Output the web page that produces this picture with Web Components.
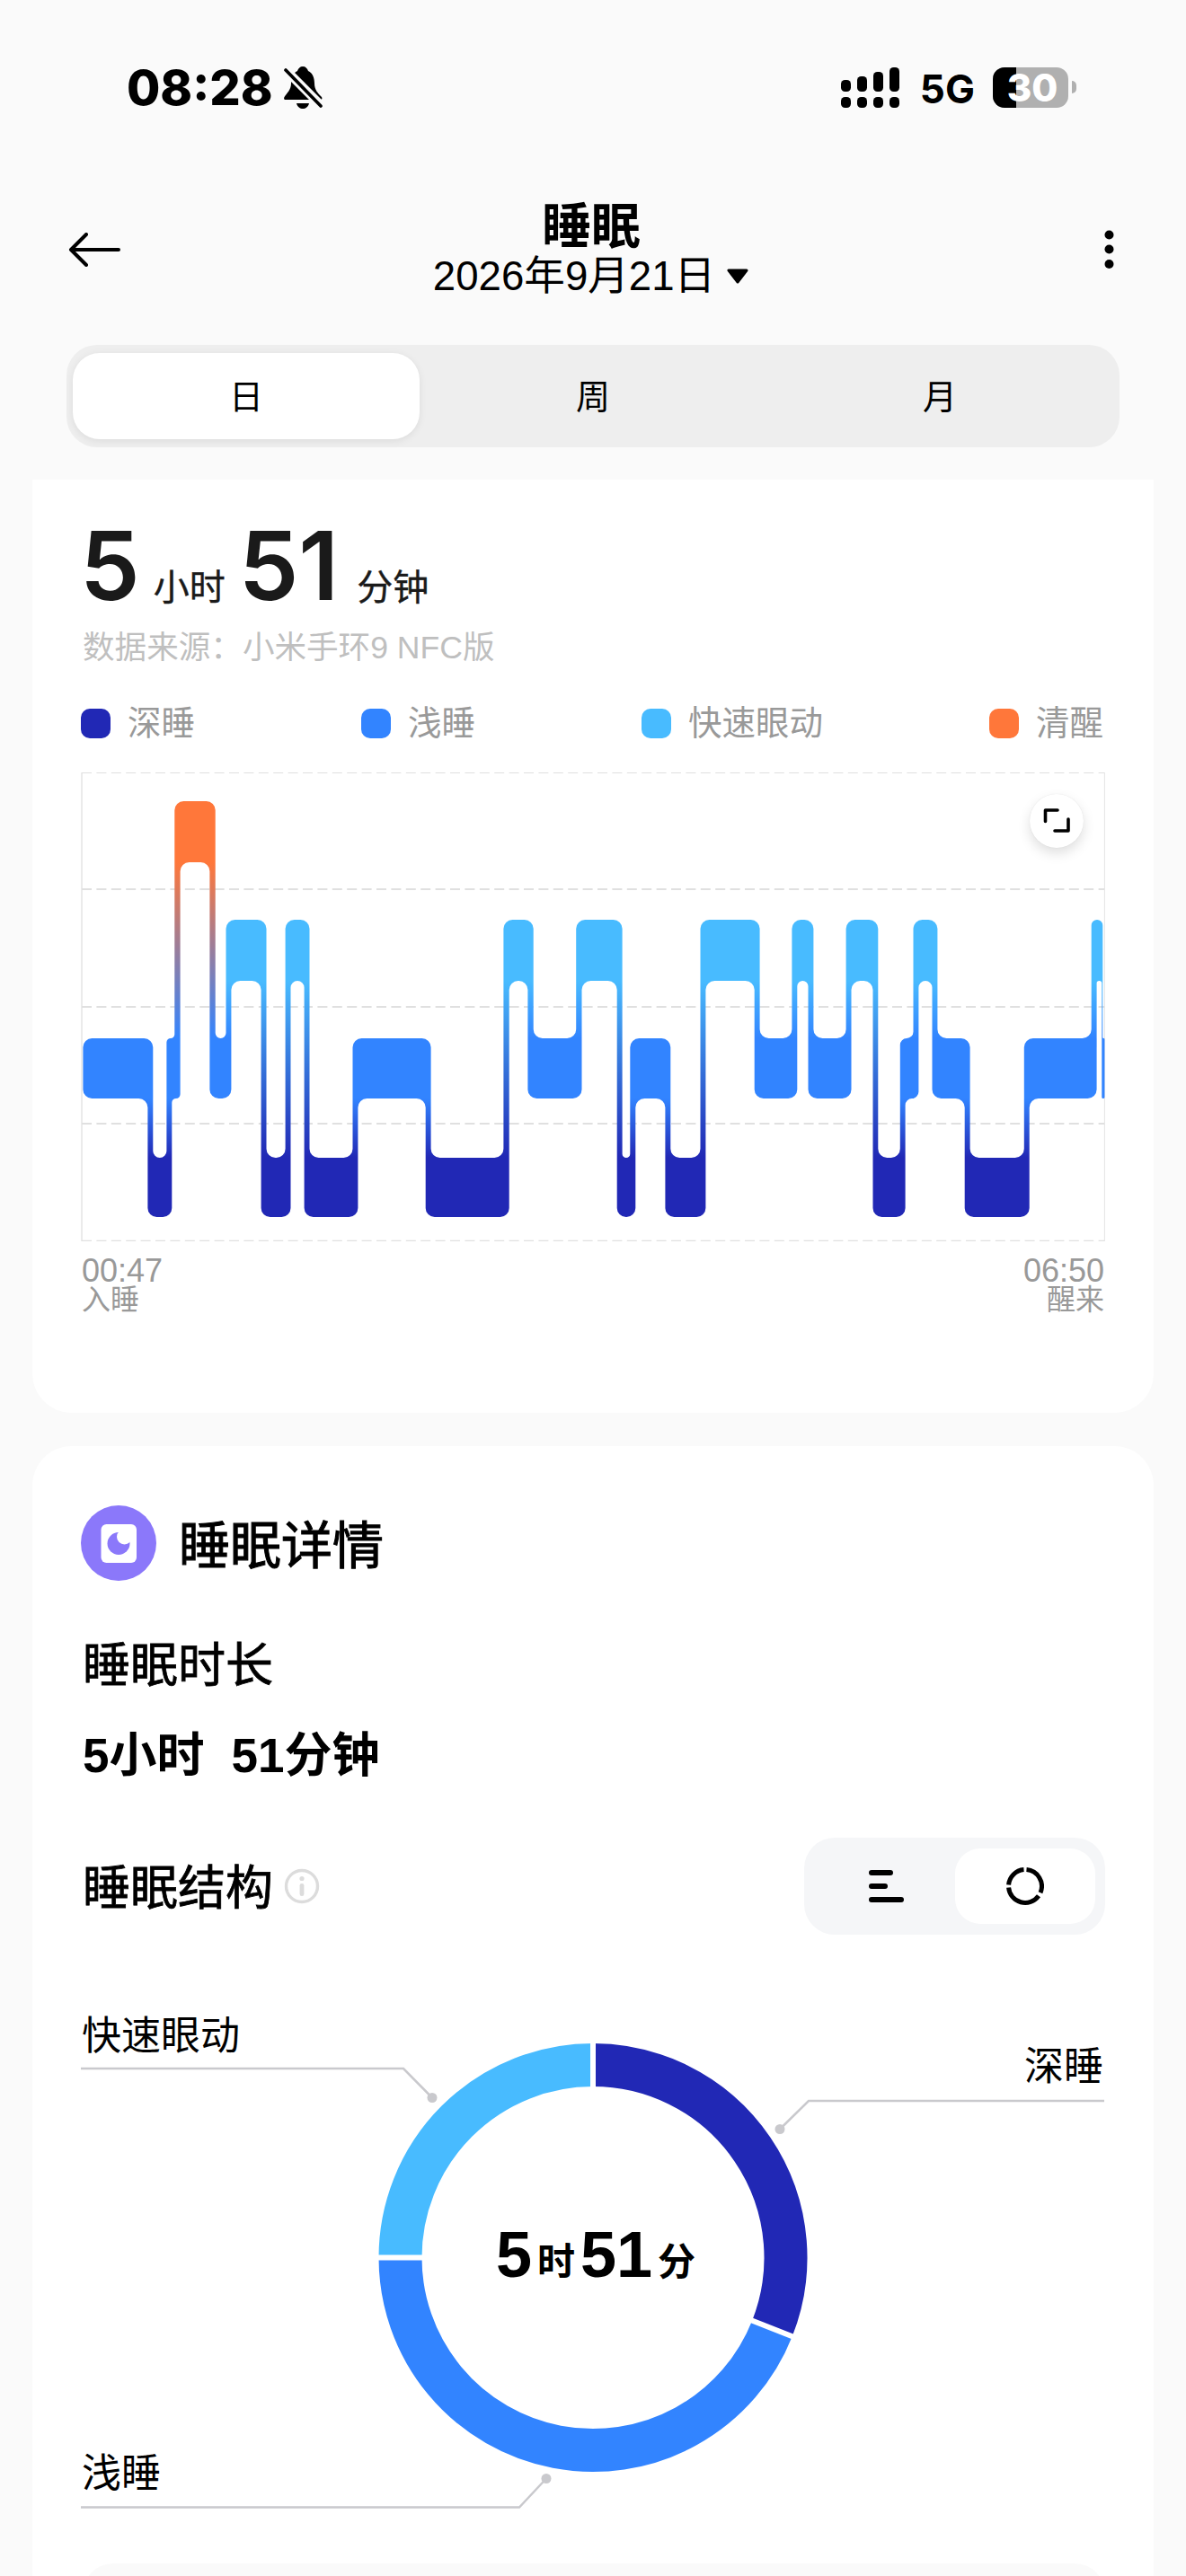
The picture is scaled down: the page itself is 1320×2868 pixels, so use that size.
<!DOCTYPE html>
<html lang="zh-CN">
<head>
<meta charset="utf-8">
<title>睡眠</title>
<style>
html, body { margin: 0; padding: 0; height: 2868px; overflow: hidden; background: #fafafa; }
body { font-family: "Liberation Sans", "Noto Sans CJK SC", sans-serif; color: #000; }
</style>
</head>
<body>
<sleep-page>
	<status-bar time="08:28" network="5G" battery="30"></status-bar>
	<nav-header title="睡眠" date="2026年9月21日"></nav-header>
	<period-tabs>
		<span slot="a">日</span>
		<span slot="b">周</span>
		<span slot="c">月</span>
	</period-tabs>
	<summary-card></summary-card>
	<details-card></details-card>
</sleep-page>
<script>
class SleepPage extends HTMLElement {
	constructor() {
		super()
		this.attachShadow({ mode: 'open' })
		this.shadowRoot.innerHTML = `
		<style>
		:host { display: flex; flex-direction: column; width: 1320px; height: 2868px; overflow: hidden; }
		</style>
		<slot></slot>
		`
	}
}

class StatusBar extends HTMLElement {
	constructor() {
		super()
		this.attachShadow({ mode: 'open' })
	}
	connectedCallback() {
		this.shadowRoot.innerHTML = `
		<style>
		:host { display: flex; justify-content: space-between; align-items: flex-start; height: 200px; padding: 74px 122px 0 141px; box-sizing: border-box; font-family: Inter, "Liberation Sans", sans-serif; color: #000; }
		.left, .right { display: flex; align-items: center; height: 46px; }
		.time { font-size: 54px; font-weight: 800; line-height: 46px; padding-top: 1px; }
		.bell { margin-left: 12px; }
		.net { font-size: 44px; font-weight: 700; line-height: 46px; margin: 0 20px 0 23px; padding-top: 3px; }
		.battery { display: flex; align-items: center; position: relative; }
		.cell { position: relative; width: 84px; height: 45px; border-radius: 13px; background: #b0b0b0; font-size: 42px; font-weight: 800; line-height: 45px; color: #fff; text-align: center; }
		.cell i { position: absolute; left: 0; top: 0; bottom: 0; width: 26px; border-radius: 13px 0 0 13px; background: #000; }
		.cell b { position: relative; font-weight: 800; left: 2px; }
		.tip { width: 5px; height: 14px; margin-left: 4px; border-radius: 0 7px 7px 0; background: #b0b0b0; }
		</style>
		<div class="left">
			<span class="time">${this.getAttribute('time')}</span>
			<svg class="bell" width="43" height="47" viewBox="0 0 43 47">
				<path d="M21 0C18 0 16 2 15 5C10 7 8 13 8 19C8 26 3 30 .5 34C-.5 36 .5 37 2 37H40C42 37 43 36 42 34C38 30 34 26 34 19C34 13 32 7 27 5C26 2 24 0 21 0Z"/>
				<path d="M14 41H28C27 45 24 47 21 47C18 47 15 45 14 41Z"/>
				<path d="M1 3L42 44" stroke="#fafafa" stroke-width="10"/>
				<path d="M2 4L41 44" stroke="#000" stroke-width="3.6" stroke-linecap="round"/>
			</svg>
		</div>
		<div class="right">
			<svg width="65" height="45" viewBox="0 0 65 45">
				<rect x="0" y="14" width="11" height="13" rx="4.5"/><rect x="18" y="10" width="11" height="17" rx="4.5"/><rect x="36" y="5" width="11" height="22" rx="4.5"/><rect x="54" y="0" width="11" height="27" rx="4.5"/>
				<rect x="0" y="33" width="11" height="12" rx="4.5"/><rect x="18" y="33" width="11" height="12" rx="4.5"/><rect x="36" y="33" width="11" height="12" rx="4.5"/><rect x="54" y="33" width="11" height="12" rx="4.5"/>
			</svg>
			<span class="net">${this.getAttribute('network')}</span>
			<div class="battery">
				<div class="cell"><i></i><b>${this.getAttribute('battery')}</b></div>
				<div class="tip"></div>
			</div>
		</div>
		`
	}
}

class NavHeader extends HTMLElement {
	constructor() {
		super()
		this.attachShadow({ mode: 'open' })
	}
	connectedCallback() {
		this.shadowRoot.innerHTML = `
		<style>
		:host { display: grid; grid-template-columns: 130px 1fr 130px; align-items: center; height: 155px; padding: 0 80px 0 76px; box-sizing: border-box; }
		.mid { display: flex; flex-direction: column; align-items: center; padding-bottom: 2px; }
		.title { font-size: 55px; font-weight: 700; line-height: 62px; }
		.date { display: flex; align-items: center; gap: 12px; font-size: 45.6px; line-height: 50px; }
		.more { justify-self: end; }
		</style>
		<svg width="58" height="38" viewBox="0 0 58 38">
			<path d="M56 19H3M20 2L3 19L20 36" fill="none" stroke="#000" stroke-width="4" stroke-linecap="round" stroke-linejoin="round"/>
		</svg>
		<div class="mid">
			<div class="title">${this.getAttribute('title')}</div>
			<div class="date">
				<span>${this.getAttribute('date')}</span>
				<svg width="26" height="17" viewBox="0 0 26 17"><path d="M3 2H23L13 15Z" fill="#000" stroke="#000" stroke-width="3" stroke-linejoin="round"/></svg>
			</div>
		</div>
		<svg class="more" width="11" height="44" viewBox="0 0 11 44">
			<circle cx="5.5" cy="5.5" r="5"/><circle cx="5.5" cy="21.5" r="5"/><circle cx="5.5" cy="38" r="5"/>
		</svg>
		`
	}
}

class PeriodTabs extends HTMLElement {
	constructor() {
		super()
		this.attachShadow({ mode: 'open' })
		this.shadowRoot.innerHTML = `
		<style>
		:host { display: grid; grid-template-columns: repeat(3, 386px); flex: none; height: 114px; margin: 29px 74px 0; padding: 9px 7px; box-sizing: border-box; border-radius: 34px; background: #eeeeee; font-size: 38px; color: #000; }
		div { display: flex; align-items: center; justify-content: center; padding-bottom: 5px; box-sizing: border-box; border-radius: 30px; }
		.on { background: #fff; box-shadow: 0 2px 8px rgba(0,0,0,.08); }
		</style>
		<div class="on"><slot name="a"></slot></div>
		<div><slot name="b"></slot></div>
		<div><slot name="c"></slot></div>
		`
	}
}

class LegendItem extends HTMLElement {
	constructor() {
		super()
		this.attachShadow({ mode: 'open' })
	}
	connectedCallback() {
		this.shadowRoot.innerHTML = `
		<style>
		:host { display: flex; align-items: center; gap: 19px; font-size: 37.5px; line-height: 44px; color: #999; }
		i { width: 33px; height: 33px; border-radius: 10px; background: ${this.getAttribute('color')}; }
		</style>
		<i></i><slot></slot>
		`
	}
}

// stages: top edge, bottom edge, colour, order from the top of the chart
const STAGES = {
	W: { top: 892, bottom: 960, color: '#ff773a', rank: 0 },
	R: { top: 1024, bottom: 1092, color: '#48bbff', rank: 1 },
	L: { top: 1156, bottom: 1223, color: '#3284ff', rank: 2 },
	D: { top: 1289, bottom: 1355, color: '#2128b5', rank: 3 }
}
const SEGMENTS = [
	[92.4, 170.3, 'L'], [164.4, 191.3, 'D'], [185.4, 200.6, 'L'], [194.3, 239.7, 'W'],
	[233.4, 257.4, 'L'], [251.5, 296.5, 'R'], [290.6, 323.5, 'D'], [317.6, 344.5, 'R'],
	[338.6, 398.4, 'D'], [392.5, 479.6, 'L'], [473.7, 566.7, 'D'], [560.4, 593.7, 'R'],
	[587.4, 647.5, 'L'], [641.2, 692.6, 'R'], [686.7, 707.3, 'D'], [701.3, 746.3, 'L'],
	[740.4, 785.4, 'D'], [779.5, 845.6, 'R'], [839.7, 887.3, 'L'], [881.4, 905.4, 'R'],
	[899.5, 947.5, 'L'], [941.6, 977.3, 'R'], [971.5, 1007.6, 'D'], [1001.8, 1022.4, 'L'],
	[1016.5, 1043.4, 'R'], [1037.5, 1079.6, 'L'], [1073.7, 1145.7, 'D'], [1139.8, 1220.6, 'L'],
	[1214.7, 1227.3, 'R'], [1226.3, 1229.4, 'L']
]

class StageChart extends HTMLElement {
	constructor() {
		super()
		this.attachShadow({ mode: 'open' })
		this.shadowRoot.innerHTML = `
		<style>
		:host { display: block; position: relative; width: 1140px; height: 522px; }
		svg.chart { display: block; }
		.expand { position: absolute; left: 1056px; top: 24px; width: 60px; height: 60px; border-radius: 50%; background: #fff; box-shadow: 0 6px 14px rgba(0,0,0,.13), 0 0 1px rgba(0,0,0,.12); display: flex; align-items: center; justify-content: center; }
		</style>
		<svg class="chart" width="1140" height="522" viewBox="90 860 1140 522">${this._grid()}${this._stages()}</svg>
		<div class="expand">
			<svg width="30" height="30" viewBox="0 0 30 30" fill="none" stroke="#000" stroke-width="3.6" stroke-linecap="round" stroke-linejoin="round">
				<path d="M2.5 15.5V3H16M28 13V26H13"/>
			</svg>
		</div>
		`
	}
	_grid() {
		const dash = 'stroke="#e0e0e0" stroke-dasharray="11 5.4"'
		return `
		<path d="M91 860V1382" stroke="#e4e4e4" stroke-width="1.5"/>
		<path d="M1229.4 860V1382" stroke="#e4e4e4" stroke-width="1"/>
		<path d="M91 860.5H1229" ${dash} stroke-width="1"/>
		<path d="M91 990H1229" ${dash} stroke-width="2"/>
		<path d="M91 1121H1229" ${dash} stroke-width="2"/>
		<path d="M91 1251H1229" ${dash} stroke-width="2"/>
		<path d="M91 1381.5H1229" ${dash} stroke-width="1.5"/>
		`
	}
	// free width along one side of a band, shared by its corners and fillets
	_radius(i, side) {
		const [x0, x1, key] = SEGMENTS[i]
		let free = x1 - x0
		for(const n of [i - 1, i + 1]) {
			const other = SEGMENTS[n]
			if(!other) continue
			const above = STAGES[other[2]].rank < STAGES[key].rank
			if((side === 'top') === above) {
				free -= n < i ? other[1] - x0 : x1 - other[0]
			}
		}
		return Math.max(0, Math.min(10, free / 2))
	}
	_stages() {
		let bands = ''
		let links = ''
		let defs = ''
		const made = {}
		SEGMENTS.forEach(([x0, x1, key], i) => {
			const s = STAGES[key]
			const prev = SEGMENTS[i - 1]
			const next = SEGMENTS[i + 1]
			const top = this._radius(i, 'top')
			const bottom = this._radius(i, 'bottom')
			const prevUp = prev && STAGES[prev[2]].rank < s.rank
			const prevDown = prev && STAGES[prev[2]].rank > s.rank
			const nextUp = next && STAGES[next[2]].rank < s.rank
			const nextDown = next && STAGES[next[2]].rank > s.rank
			const tl = prevUp ? 0 : top
			const bl = prevDown ? 0 : bottom
			const tr = nextUp ? 0 : top
			const br = nextDown ? 0 : bottom
			bands += `<path fill="${s.color}" d="M${x0 + tl} ${s.top}H${x1 - tr}A${tr} ${tr} 0 0 1 ${x1} ${s.top + tr}V${s.bottom - br}A${br} ${br} 0 0 1 ${x1 - br} ${s.bottom}H${x0 + bl}A${bl} ${bl} 0 0 1 ${x0} ${s.bottom - bl}V${s.top + tl}A${tl} ${tl} 0 0 1 ${x0 + tl} ${s.top}Z"/>`
			if(!next) return
			const c0 = next[0]
			const c1 = x1
			const t = STAGES[next[2]]
			const down = t.rank > s.rank
			const upper = down ? s : t
			const lower = down ? t : s
			const id = (down ? key + next[2] : next[2] + key)
			if(!made[id]) {
				made[id] = true
				defs += `<linearGradient id="g${id}" gradientUnits="userSpaceOnUse" x1="0" x2="0" y1="${upper.bottom}" y2="${lower.top}"><stop offset="0" stop-color="${upper.color}"/><stop offset="1" stop-color="${lower.color}"/></linearGradient>`
			}
			if(down) {
				const r1 = bottom
				const r2 = this._radius(i + 1, 'top')
				links += `<path fill="url(#g${id})" d="M${c0 - r1} ${upper.bottom}A${r1} ${r1} 0 0 1 ${c0} ${upper.bottom + r1}V${lower.top}H${c1 + r2}A${r2} ${r2} 0 0 1 ${c1} ${lower.top - r2}V${upper.bottom}Z"/>`
			}
			else {
				const r1 = this._radius(i + 1, 'bottom')
				const r2 = top
				links += `<path fill="url(#g${id})" d="M${c1 + r1} ${upper.bottom}A${r1} ${r1} 0 0 0 ${c1} ${upper.bottom + r1}V${lower.top}H${c0 - r2}A${r2} ${r2} 0 0 0 ${c0} ${lower.top - r2}V${upper.bottom}Z"/>`
			}
		})
		return `<defs>${defs}</defs>${links}${bands}`
	}
}

class SummaryCard extends HTMLElement {
	constructor() {
		super()
		this.attachShadow({ mode: 'open' })
		this.shadowRoot.innerHTML = `
		<style>
		:host { display: block; flex: none; height: 1039px; margin: 36px 36px 37px; padding: 0 54px; box-sizing: border-box; background: #fff; border-radius: 0 0 44px 44px; }
		.total { display: flex; align-items: baseline; height: 150px; margin-left: -1px; padding-top: 41px; box-sizing: border-box; color: #1a1a1a; }
		.num { font-family: Inter, "Liberation Sans", sans-serif; font-size: 106px; font-weight: 600; line-height: 110px; }
		.unit { font-size: 40px; line-height: 50px; -webkit-text-stroke: .4px #1a1a1a; }
		.u1 { margin: 0 15px 0 15px; }
		.u2 { margin-left: 20px; }
		.source { margin: 15px 0 0 2px; font-size: 35.6px; line-height: 44px; color: #bfbfbf; white-space: nowrap; }
		.legend { display: flex; justify-content: space-between; margin-top: 40px; width: 1138px; }
		stage-chart { margin-top: 33px; }
		.ends { display: flex; justify-content: space-between; width: 1138px; margin: 16px 0 0 1px; color: #999; }
		.ends div:last-child { text-align: right; }
		.ends b { display: block; font-weight: 400; font-size: 36px; line-height: 33px; }
		.ends span { display: block; font-size: 32px; line-height: 32px; }
		</style>
		<div class="total">
			<span class="num">5</span><span class="unit u1">小时</span><span class="num">51</span><span class="unit u2">分钟</span>
		</div>
		<div class="source">数据来源：小米手环9 NFC版</div>
		<div class="legend">
			<legend-item color="#2128b5">深睡</legend-item>
			<legend-item color="#3284ff">浅睡</legend-item>
			<legend-item color="#48bbff">快速眼动</legend-item>
			<legend-item color="#ff773a">清醒</legend-item>
		</div>
		<stage-chart></stage-chart>
		<div class="ends">
			<div><b>00:47</b><span>入睡</span></div>
			<div><b>06:50</b><span>醒来</span></div>
		</div>
		`
	}
}

class ViewToggle extends HTMLElement {
	constructor() {
		super()
		this.attachShadow({ mode: 'open' })
		this.shadowRoot.innerHTML = `
		<style>
		:host { display: grid; grid-template-columns: 168px 156px; width: 335px; height: 108px; padding: 12px 11px 12px 0; box-sizing: border-box; border-radius: 34px; background: #f5f6f8; }
		div { display: flex; align-items: center; justify-content: center; border-radius: 28px; }
		.lines { padding-left: 16px; }
		.on { background: #fff; }
		</style>
		<div class="lines">
			<svg width="40" height="36" viewBox="0 0 40 36" stroke="#000" stroke-width="6" stroke-linecap="round">
				<path d="M3 3H24M3 18H18M3 33H36"/>
			</svg>
		</div>
		<div class="on">
			<svg width="42" height="42" viewBox="-21 -21 42 42" fill="none" stroke="#000" stroke-width="5">
				<path d="M1.5 -18.4A18.5 18.5 0 0 1 17 7.2"/>
				<path d="M15 10.8A18.5 18.5 0 0 1 -18.4 1.5"/>
				<path d="M-18.4 -1.5A18.5 18.5 0 0 1 -1.5 -18.4"/>
			</svg>
		</div>
		`
	}
}

class SleepDonut extends HTMLElement {
	constructor() {
		super()
		this.attachShadow({ mode: 'open' })
		this.shadowRoot.innerHTML = `
		<style>
		:host { display: block; position: relative; flex: none; width: 1140px; height: 620px; font-size: 44px; line-height: 50px; color: #000; }
		svg { display: block; }
		span { position: absolute; white-space: nowrap; }
		.total { position: absolute; left: 376px; top: 270px; width: 400px; display: flex; align-items: baseline; justify-content: center; color: #000; font-weight: 700; line-height: 80px; }
		.total b { font-size: 72px; }
		.total i { position: relative; top: -2px; font-style: normal; font-size: 42px; margin: 0 6px; }
		</style>
		<svg width="1140" height="620" viewBox="90 2200 1140 620">
			<g fill="none" stroke-width="48">
				<path stroke="#2128b5" d="${this._arc(0, 111.6)}"/>
				<path stroke="#3284ff" d="${this._arc(111.6, 270)}"/>
				<path stroke="#48bbff" d="${this._arc(270, 360)}"/>
			</g>
			<g stroke="#fff" stroke-width="6">
				<path d="M660 2270V2330"/>
				<path d="M418 2513.5H480"/>
				<path d="${this._spoke(111.6)}"/>
			</g>
			<g fill="none" stroke="#c9c9cd" stroke-width="2.5">
				<path d="M90 2303H449L481 2335.5"/>
				<path d="M1229 2339H900L868 2370.5"/>
				<path d="M90 2791.5H578L608 2759.5"/>
			</g>
			<g fill="#c9c9cd">
				<circle cx="481" cy="2335.5" r="5.5"/>
				<circle cx="868" cy="2370.5" r="5.5"/>
				<circle cx="608" cy="2759.5" r="5.5"/>
			</g>
		</svg>
		<span style="left: 1px; top: 42px">快速眼动</span>
		<span style="right: 2px; top: 76px">深睡</span>
		<span style="left: 1px; top: 529px">浅睡</span>
		<div class="total"><b>5</b><i>时</i><b>51</b><i>分</i></div>
		`
	}
	_point(deg, r) {
		const a = deg * Math.PI / 180
		return [660 + r * Math.sin(a), 2513.5 - r * Math.cos(a)]
	}
	_arc(from, to) {
		const [x0, y0] = this._point(from, 214.5)
		const [x1, y1] = this._point(to, 214.5)
		return `M${x0} ${y0}A214.5 214.5 0 ${to - from > 180 ? 1 : 0} 1 ${x1} ${y1}`
	}
	_spoke(deg) {
		const [x0, y0] = this._point(deg, 184)
		const [x1, y1] = this._point(deg, 244)
		return `M${x0} ${y0}L${x1} ${y1}`
	}
}

class DetailsCard extends HTMLElement {
	constructor() {
		super()
		this.attachShadow({ mode: 'open' })
		this.shadowRoot.innerHTML = `
		<style>
		:host { display: block; flex: none; height: 1258px; margin: 0 36px; padding: 66px 54px 0; box-sizing: border-box; background: #fff; border-radius: 44px 44px 0 0; overflow: hidden; }
		.head { display: flex; align-items: center; gap: 25px; height: 84px; font-size: 57px; line-height: 70px; -webkit-text-stroke: 1.1px #000; }
		.head span { padding-top: 5px; }
		.line { font-size: 53px; line-height: 60px; margin-left: 2px; -webkit-text-stroke: .8px #000; }
		.first { margin-top: 65px; }
		.value { margin-top: 40px; font-weight: 700; -webkit-text-stroke: 0; }
		.value span { margin-right: 30px; }
		.row { display: flex; justify-content: space-between; align-items: center; margin-top: 61px; }
		.row .name { display: flex; align-items: center; gap: 12px; margin: -5px 0 0 2px; font-size: 53px; -webkit-text-stroke: .8px #000; }
		.row svg { margin-top: 5px; }
		sleep-donut { margin-top: 46px; }
		.next { height: 80px; margin: 34px 0 0 2px; border-radius: 34px; background: #fafafa; }
		</style>
		<div class="head">
			<svg width="84" height="84" viewBox="0 0 84 84" stroke-width="0">
				<circle cx="42" cy="42" r="42" fill="#8b78fa"/>
				<rect x="22.5" y="21" width="39.5" height="43" rx="6" fill="#fff"/>
				<circle cx="42" cy="42.5" r="12.5" fill="#8b78fa"/>
				<circle cx="48.5" cy="35" r="8.5" fill="#fff"/>
			</svg>
			<span>睡眠详情</span>
		</div>
		<div class="line first">睡眠时长</div>
		<div class="line value"><span>5小时</span>51分钟</div>
		<div class="row">
			<div class="name">睡眠结构
				<svg width="40" height="40" viewBox="0 0 40 40" stroke-width="0">
					<circle cx="20" cy="20" r="17.5" fill="none" stroke="#dcdcdc" stroke-width="3.4"/>
					<circle cx="20" cy="11.5" r="2.6" fill="#dcdcdc"/>
					<rect x="17.6" y="17" width="4.8" height="14" rx="2.2" fill="#dcdcdc"/>
				</svg>
			</div>
			<view-toggle></view-toggle>
		</div>
		<sleep-donut></sleep-donut>
		<div class="next"></div>
		`
	}
}

window.customElements.define('status-bar', StatusBar)
window.customElements.define('nav-header', NavHeader)
window.customElements.define('period-tabs', PeriodTabs)
window.customElements.define('legend-item', LegendItem)
window.customElements.define('stage-chart', StageChart)
window.customElements.define('view-toggle', ViewToggle)
window.customElements.define('sleep-donut', SleepDonut)
window.customElements.define('summary-card', SummaryCard)
window.customElements.define('details-card', DetailsCard)
window.customElements.define('sleep-page', SleepPage)
</script>
</body>
</html>
